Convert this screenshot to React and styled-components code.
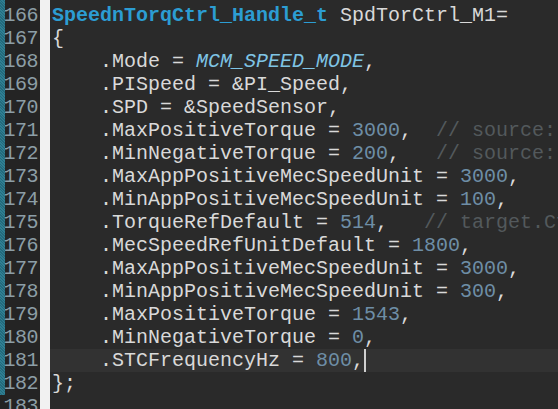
import styled, { createGlobalStyle } from 'styled-components';

const GlobalStyle = createGlobalStyle`
  html, body {
    margin: 0;
    padding: 0;
    background: #2a2a2a;
    overflow: hidden;
  }
`;

const lines = [
  [
    { t: 'type', v: 'SpeednTorqCtrl_Handle_t' },
    { v: ' SpdTorCtrl_M1=' },
  ],
  [{ v: '{' }],
  [{ v: '    .Mode = ' }, { t: 'enum', v: 'MCM_SPEED_MODE' }, { v: ',' }],
  [{ v: '    .PISpeed = &PI_Speed,' }],
  [{ v: '    .SPD = &SpeedSensor,' }],
  [
    { v: '    .MaxPositiveTorque = ' },
    { t: 'num', v: '3000' },
    { v: ',  ' },
    { t: 'comment', v: '// source: motor limits' },
  ],
  [
    { v: '    .MinNegativeTorque = ' },
    { t: 'num', v: '200' },
    { v: ',   ' },
    { t: 'comment', v: '// source: motor limits' },
  ],
  [{ v: '    .MaxAppPositiveMecSpeedUnit = ' }, { t: 'num', v: '3000' }, { v: ',' }],
  [{ v: '    .MinAppPositiveMecSpeedUnit = ' }, { t: 'num', v: '100' }, { v: ',' }],
  [
    { v: '    .TorqueRefDefault = ' },
    { t: 'num', v: '514' },
    { v: ',   ' },
    { t: 'comment', v: '// target.Cfg' },
  ],
  [{ v: '    .MecSpeedRefUnitDefault = ' }, { t: 'num', v: '1800' }, { v: ',' }],
  [{ v: '    .MaxAppPositiveMecSpeedUnit = ' }, { t: 'num', v: '3000' }, { v: ',' }],
  [{ v: '    .MinAppPositiveMecSpeedUnit = ' }, { t: 'num', v: '300' }, { v: ',' }],
  [{ v: '    .MaxPositiveTorque = ' }, { t: 'num', v: '1543' }, { v: ',' }],
  [{ v: '    .MinNegativeTorque = ' }, { t: 'num', v: '0' }, { v: ',' }],
  [{ v: '    .STCFrequencyHz = ' }, { t: 'num', v: '800' }, { v: ',' }],
  [{ v: '};' }],
  [{ v: '' }],
];

const FIRST = 166;
const ACTIVE = 15;

export default function App() {
  return (
    <>
      <GlobalStyle />
      <Window>
        <Gutter>
          <ChangeBar />
          <Numbers>
            {lines.map((_, i) => (
              <LineNo key={i}>{FIRST + i}</LineNo>
            ))}
          </Numbers>
        </Gutter>
        <Divider />
        <Editor>
          {lines.map((tokens, i) => (
            <Row key={i} $active={i === ACTIVE}>
              {tokens.map((tok, j) => (
                <Token key={j} $kind={tok.t}>
                  {tok.v}
                </Token>
              ))}
              {i === ACTIVE && <Caret />}
            </Row>
          ))}
        </Editor>
      </Window>
    </>
  );
}

const Window = styled.div`
  display: flex;
  width: 558px;
  height: 409px;
  overflow: hidden;
  font-family: 'Liberation Mono', 'Courier New', monospace;
  font-size: 20px;
`;

const Gutter = styled.div`
  position: relative;
  width: 40px;
  flex-shrink: 0;
  background: #242424;
`;

const ChangeBar = styled.div`
  position: absolute;
  left: 0;
  top: 0;
  width: 5px;
  height: 395px;
  background: repeating-linear-gradient(
    45deg,
    #2f7f93 0 1px,
    #246a7c 1px 2px
  );
`;

const Numbers = styled.div`
  padding-top: 4px;
  padding-right: 2px;
  text-align: right;
`;

const LineNo = styled.div`
  height: 23px;
  line-height: 23px;
  color: #8c9ea6;
  letter-spacing: -0.5px;
`;

const Divider = styled.div`
  width: 10px;
  flex-shrink: 0;
  background: #f1f1f1;
`;

const Editor = styled.div`
  flex: 1;
  min-width: 0;
  padding-top: 4px;
  background: #2a2a2a;
  overflow: hidden;
`;

const Row = styled.div`
  position: relative;
  height: 23px;
  line-height: 23px;
  padding-left: 2px;
  white-space: pre;
  color: #d9d9d9;
  background: ${(p) => (p.$active ? '#323232' : 'transparent')};
`;

const kindStyles = {
  type: 'color: #2c9dd3; font-weight: bold;',
  enum: 'color: #7fc4e4; font-style: italic;',
  num: 'color: #6e8ea6;',
  comment: 'color: #53595c;',
};

const Token = styled.span`
  ${(p) => kindStyles[p.$kind] || ''}
`;

const Caret = styled.span`
  display: inline-block;
  width: 2px;
  height: 23px;
  vertical-align: top;
  background: #cfcfcf;
`;
